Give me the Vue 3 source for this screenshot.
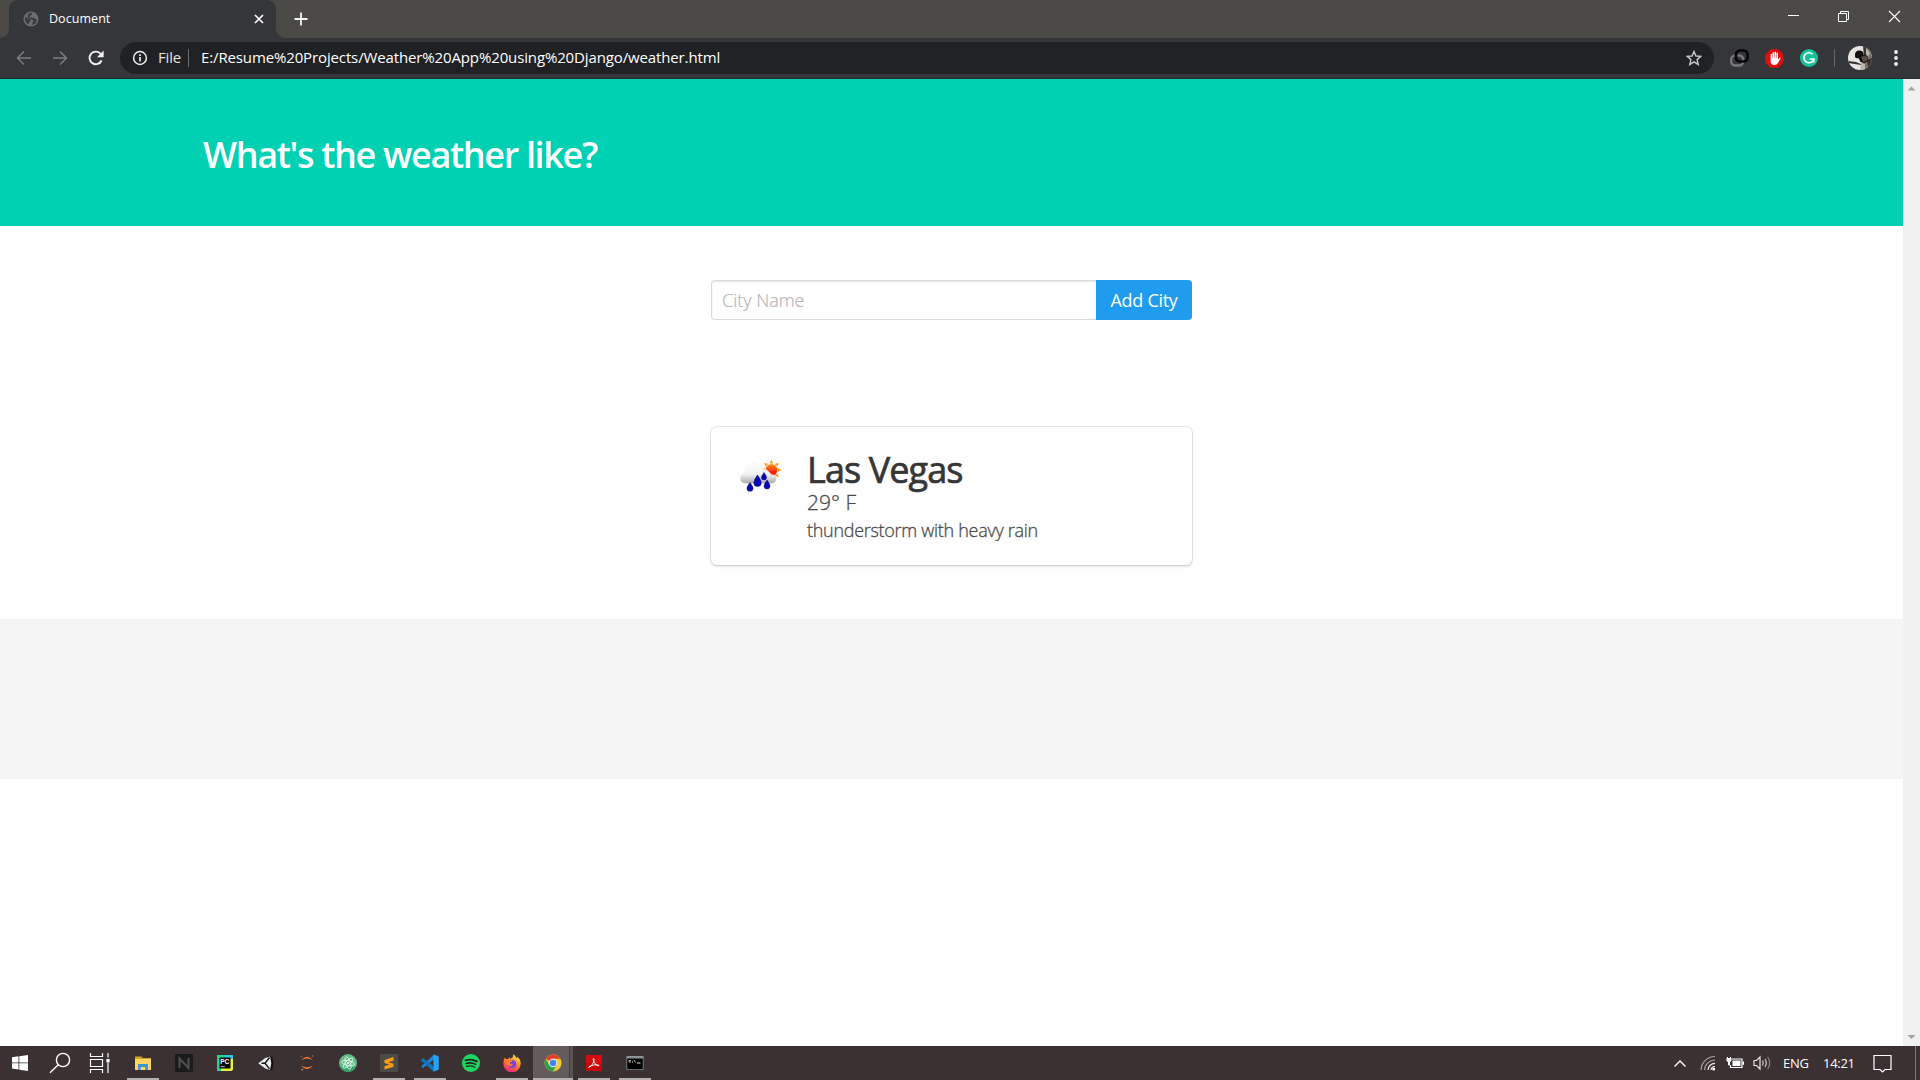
<script setup>
const tasks = [
  { id: 'explorer', open: true },
  { id: 'next' },
  { id: 'pycharm' },
  { id: 'unity' },
  { id: 'jupyter' },
  { id: 'atom' },
  { id: 'sublime', open: true },
  { id: 'vscode', open: true },
  { id: 'spotify' },
  { id: 'firefox', open: true },
  { id: 'chrome', active: true },
  { id: 'acrobat', open: true },
  { id: 'cmd', open: true },
]
const petals = [0, 60, 120]
const rays = [0, 45, 90, 135, 180, 225, 270, 315]
</script>

<template>
  <div class="screen">
    <header class="tabstrip">
      <div class="tab">
        <svg class="globe" width="16" height="16" viewBox="0 0 16 16">
          <circle cx="8" cy="8" r="7.6" fill="#6a6d71" />
          <path d="M2 5.5 5 7.5 7.5 8v2l-1.5 1 .3 2.5C3.500 12.500 2 10.500 2 8zM6 2l3-.3L8.500 4 6.500 5 7 6.500l4 .3 1.500 1.700L14 8c.2 3-2 5.500-4.800 6l.3-2.500 1-1.500L9 8.500 5.500 7 4.500 5z" fill="#3b3c40" />
        </svg>
        <span class="tab-title">Document</span>
        <svg class="tab-close" width="10" height="10" viewBox="0 0 10 10"><path d="M1 1l8 8M9 1l-8 8" stroke="#fff" stroke-width="1.7" /></svg>
      </div>
      <svg class="newtab" width="14" height="14" viewBox="0 0 14 14"><path d="M7 .5v13M.5 7h13" stroke="#f4f4f4" stroke-width="1.8" /></svg>
      <div class="winctl">
        <svg width="50" height="34" viewBox="0 0 50 34"><path d="M19 15.500h11" stroke="#fff" /></svg>
        <svg width="50" height="34" viewBox="0 0 50 34"><path d="M19.500 13.500h8v8h-8zM21.500 13.500v-2h8v8h-2" fill="none" stroke="#fff" /></svg>
        <svg width="50" height="34" viewBox="0 0 50 34"><path d="M20 11l11 11M31 11l-11 11" stroke="#fff" stroke-width="1.1" /></svg>
      </div>
    </header>

    <nav class="toolbar">
      <svg class="nav" width="16" height="16" viewBox="0 0 16 16"><path d="M15 8H2M8 1.500 1.500 8 8 14.500" fill="none" stroke="#7c7d80" stroke-width="1.5" /></svg>
      <svg class="nav" width="16" height="16" viewBox="0 0 16 16"><path d="M1 8h13M8 1.500 14.500 8 8 14.500" fill="none" stroke="#7c7d80" stroke-width="1.5" /></svg>
      <svg class="nav" width="16" height="16" viewBox="0 0 16 16"><path d="M13.600 10.500A6.300 6.300 0 1 1 12.800 4" fill="none" stroke="#f1f1f1" stroke-width="1.9" /><path d="M15.600.5v6.700H9z" fill="#f1f1f1" /></svg>
      <div class="omnibox">
        <svg width="16" height="16" viewBox="0 0 16 16"><circle cx="8" cy="8" r="6.400" fill="none" stroke="#eee" stroke-width="1.500" /><path d="M8 7v4.500M8 4.300v1.700" stroke="#eee" stroke-width="1.700" /></svg>
        <span class="scheme">File</span>
        <i class="divider"></i>
        <span class="url">E:/Resume%20Projects/Weather%20App%20using%20Django/weather.html</span>
        <svg class="star" width="16" height="16" viewBox="0 0 16 16"><path d="M8 1.500 9.900 6l4.900.400-3.700 3.200 1.100 4.800L8 11.800l-4.200 2.600 1.100-4.800L1.200 6.400 6.100 6z" fill="none" stroke="#c9cacc" stroke-width="1.400" /></svg>
      </div>
      <svg class="ext1" width="19" height="18" viewBox="0 0 19 18">
        <rect x="1.200" y="6.500" width="12" height="10" rx="4" fill="none" stroke="#76787c" stroke-width="2.400" />
        <rect x="6" y="1.500" width="11.500" height="11" rx="4" fill="none" stroke="#050506" stroke-width="2.700" />
      </svg>
      <svg class="ext2" width="19" height="19" viewBox="0 0 19 19">
        <path d="M5.600.300h7.600L18.500 5.700v7.600l-5.300 5.400H5.600L.3 13.300V5.700z" fill="#e40d0d" />
        <path d="M5.600 10V5.200q.8-.9 1.500 0V9h.4V3.500q.8-.9 1.600 0V8.500h.4V3q.8-.9 1.600 0v5.700h.4V4q.8-.9 1.500 0v6.500l1.500-1.700q1-.4 1.200.3L13 14q-1 2-3.700 2-3.700 0-3.700-4z" fill="#fff" />
      </svg>
      <svg class="ext3" width="18" height="18" viewBox="0 0 18 18">
        <circle cx="9" cy="9" r="9" fill="#15c39a" />
        <path d="M12.600 5.300A5 5 0 1 0 13.800 10H9.800M13.800 10v3.500" fill="none" stroke="#fff" stroke-width="1.600" />
      </svg>
      <i class="bar"></i>
      <svg class="avatar" width="24" height="24" viewBox="0 0 24 24">
        <defs><clipPath id="face"><circle cx="12" cy="12" r="12" /></clipPath></defs>
        <g clip-path="url(#face)">
          <rect width="24" height="24" fill="#e6e5e2" />
          <path d="M18 0h6v24h-9l-1-9z" fill="#77716a" />
          <path d="M15 0h3l1 9-3 2zM0 15l8 1 5 2v1l-13-2zM19 14l5-2v8l-4 1z" fill="#37332f" />
          <path d="M18 2l4 5-2 4-2-3zM13 17l4 1v6h-5z" fill="#b9b3a9" />
          <path d="M7 9q0-5 5-4.500Q16 5 15.500 9l4 1 1 5-4 2-4-1-2-4q-4 1-3.500-3z" fill="#12100f" />
          <path d="M13 11q4-2 7 0l-1 4-4 1z" fill="#554b43" />
        </g>
      </svg>
      <svg class="dots" width="4" height="16" viewBox="0 0 4 16" fill="#eee"><circle cx="2" cy="2" r="1.900" /><circle cx="2" cy="8" r="1.900" /><circle cx="2" cy="14" r="1.900" /></svg>
    </nav>

    <div class="viewport">
      <main class="page">
        <section class="hero"><h1>What's the weather like?</h1></section>
        <section class="form-section">
          <form class="field" @submit.prevent>
            <input type="text" placeholder="City Name" />
            <button>Add City</button>
          </form>
        </section>
        <section class="cards">
          <article class="box">
            <svg class="weather" width="50" height="50" viewBox="0 0 50 50">
              <defs>
                <linearGradient id="cloud" x1="0" y1="0" x2="0" y2="1"><stop offset="0" stop-color="#fff" /><stop offset=".55" stop-color="#f1f1f1" /><stop offset="1" stop-color="#a9a9a9" /></linearGradient>
                <linearGradient id="sun" x1="0" y1="0" x2="0" y2="1"><stop offset="0" stop-color="#ff9a16" /><stop offset=".7" stop-color="#ff2010" /></linearGradient>
              </defs>
              <g transform="translate(36.500 19)">
                <path v-for="r in rays" :key="r" d="M-2-6.500h4L0-10.300z" fill="#ffa01c" :transform="`rotate(${r})`" />
                <circle r="6" fill="url(#sun)" />
              </g>
              <path d="M10.500 32.500Q5 32 5.200 27.500 5.500 23 9.500 22 10 13 18 12.200q7 0 9.500 6 4-1.200 6 2.300l3 3.200q5 0 5 4.500-.5 4-5.500 4.300z" fill="url(#cloud)" stroke="#ededed" stroke-width=".5" />
              <g fill="#0808b5" stroke="#06067e" stroke-width=".5">
                <path d="M22.500 24q3.800 5.500 3.800 7.800a3.800 3.800 0 0 1-7.600 0q0-2.300 3.800-7.800z" />
                <path d="M29 21.500q2.500 3.500 2.500 5a2.500 2.500 0 0 1-5 0q0-1.500 2.500-5z" />
                <path d="M15 31.500q3.100 4.200 3.100 5.700a3.100 3.100 0 0 1-6.200 0q0-1.500 3.100-5.700z" />
                <path d="M32 29q3 4.300 3 6a3 3 0 0 1-6 0q0-1.700 3-6z" />
              </g>
            </svg>
            <div class="info">
              <h2>Las Vegas</h2>
              <p class="temp">29° F</p>
              <p class="desc">thunderstorm with heavy rain</p>
            </div>
          </article>
        </section>
        <footer class="footer"></footer>
      </main>
      <aside class="scroll">
        <svg width="17" height="17" viewBox="0 0 17 17"><path d="M4.500 11.500h8l-4-4z" fill="#a3a3a3" /></svg>
        <svg width="17" height="17" viewBox="0 0 17 17"><path d="M4.500 6h8l-4 4z" fill="#a3a3a3" /></svg>
      </aside>
    </div>

    <footer class="taskbar">
      <div class="sys start"><svg width="16" height="16" viewBox="0 0 16 16" fill="#fff"><path d="M0 2.200 6.500 1.300v6.200H0zM7.300 1.200 16 0v7.500H7.300zM0 8.300h6.500v6.200L0 13.600zM7.300 8.300H16V16l-8.700-1.200z" /></svg></div>
      <div class="sys search"><svg width="22" height="22" viewBox="0 0 22 22" fill="none" stroke="#fff" stroke-width="1.400"><circle cx="14" cy="8" r="6.600" /><path d="M9.300 12.800 1 20.800" /></svg></div>
      <div class="sys view"><svg width="22" height="20" viewBox="0 0 22 20" fill="none" stroke="#fff" stroke-width="1.200"><path d="M1.500 0v3.500h12V0M1.500 20v-3.500h12V20M1.500 6.500h12v7h-12zM19 0v4.500M19 10v10" /><path d="M19 6v3.500" stroke-width="3.200" /></svg></div>
      <div v-for="t in tasks" :key="t.id" class="task" :class="{ open: t.open, active: t.active }">
        <svg width="18" height="18" viewBox="0 0 18 18">
          <template v-if="t.id === 'explorer'"><path d="M1 2.500h6.500l1 1.500H17v12H1z" fill="#dba21d" /><path d="M1 5h16v11H1z" fill="#ffd465" /><path d="M4 16v-6h10v6h-2.700v-3H6.700v3z" fill="#3f93dc" /></template>
          <template v-else-if="t.id === 'next'"><rect width="18" height="18" rx="1.500" fill="#1b1b1c" /><path d="M4.500 14V4.500L13.500 14V4" fill="none" stroke="#4e5153" stroke-width="2" /></template>
          <template v-else-if="t.id === 'pycharm'"><path d="M1 1h8l-3 16H1z" fill="#21d789" /><path d="M9 1h8v5H6z" fill="#33c5e0" /><path d="M17 5v10.500L15.500 17H5l-1-3 9-9z" fill="#e9ef3d" /><path d="M1 10h4v7H1z" fill="#21d789" /><rect x="3.500" y="3.500" width="11" height="11" fill="#070707" /><text x="4.200" y="9.600" font-size="6.500" font-weight="700" fill="#fff" font-family="Liberation Sans, sans-serif">PC</text><path d="M4.700 12.700h4" stroke="#bbb" /></template>
          <template v-else-if="t.id === 'unity'"><path d="M1 9.300 12.200 2l3.300 1.200.9 6.100-.9 6.200-3.300 1.300z" fill="#111" /><path d="M1.200 9.200 8.300 4l4.700-1.500 1.300 6.700-1.300 6.700-4.700-1.500z" fill="#efefef" /><path d="M8 9.200h-3.500M8 9.200 12.500 3.500M8 9.200l4.500 5.700" stroke="#151515" fill="none" stroke-width="1.500" /></template>
          <template v-else-if="t.id === 'jupyter'"><path d="M3 6.300Q9-1 15 6.300 9 2.800 3 6.300zM3 11.500q6 7.300 12 0-6 3.500-12 0z" fill="#f37726" /><circle cx="14.500" cy="2" r=".8" fill="#888" /><circle cx="3.500" cy="2.500" r=".7" fill="#777" /><circle cx="4.300" cy="15.600" r="1.100" fill="#8a8784" /></template>
          <template v-else-if="t.id === 'atom'"><circle cx="9" cy="9" r="9" fill="#62ba85" /><path d="M1 13a9 9 0 0 0 16 0z" fill="#38a06b" /><g fill="none" stroke="#e2f4e8" stroke-width=".9"><ellipse v-for="p in petals" :key="p" cx="9" cy="9" rx="6.500" ry="2.400" :transform="`rotate(${p + 12} 9 9)`" /></g><circle cx="9" cy="9" r="1.100" fill="#fff" /></template>
          <template v-else-if="t.id === 'sublime'"><rect width="18" height="18" rx="1.200" fill="#4b4b4a" /><path d="M4.500 6 13.500 3v3.400L8.300 8.200l5.200 1.600v3L4.500 15.500v-3.300L9.500 10.600 4.500 9z" fill="#ff9b11" /></template>
          <template v-else-if="t.id === 'vscode'"><path d="M13 .5v5L2 14 .3 12.200z" fill="#1b87d2" /><path d="M.3 5.800 2 4 13 12.500v5.200L.3 6.800z" fill="#0d74c0" /><path d="M12.500.2 17.800 2.500v13l-5.300 2.300z" fill="#27a3f2" /></template>
          <template v-else-if="t.id === 'spotify'"><circle cx="9" cy="9" r="9" fill="#1ed760" /><g fill="none" stroke="#202120" stroke-linecap="round"><path d="M3.500 6.300q6-1.800 11.300 1" stroke-width="1.900" /><path d="M4 9.400q5.200-1.400 9.800 1" stroke-width="1.600" /><path d="M4.500 12.300q4.600-1.100 8.300.9" stroke-width="1.300" /></g></template>
          <template v-else-if="t.id === 'firefox'"><defs><linearGradient id="fox" x1=".8" y1="0" x2=".3" y2="1"><stop offset="0" stop-color="#fff04a" /><stop offset=".45" stop-color="#ff8a25" /><stop offset="1" stop-color="#f0207c" /></linearGradient></defs><path d="M1.800 3.500 3.200 5.300 5.500 4.700 6.300 2.700 7 5l3-2 .3-2.700q2 1.200 3.200 4l1-1.500q3.500 3.200 3.200 7A8.700 8.700 0 0 1 .3 9.500Q.3 6 1.800 3.500z" fill="url(#fox)" /><circle cx="9.300" cy="10" r="4" fill="#7c42e0" /><path d="M3 6.500q4-1 6.500 0L8.700 8 6.800 8.500q.2 2.500 3.400 2-1.700 2.500-4.500 1-2.500-1.500-2.700-5z" fill="#ff8126" /></template>
          <template v-else-if="t.id === 'chrome'"><circle cx="9" cy="9" r="8.500" fill="#fcc934" /><path d="M9 9 1.640 4.750A8.500 8.500 0 0 1 16.360 4.750H9z" fill="#e3402f" /><path d="M1.640 4.750A8.500 8.500 0 0 0 9 17.500L12.700 11 9 9 5.300 11z" fill="#2a9f4f" /><circle cx="9" cy="9" r="4.300" fill="#f5f5f5" /><circle cx="9" cy="9" r="3.300" fill="#4284f3" /></template>
          <template v-else-if="t.id === 'acrobat'"><rect x="1" y="1" width="16" height="16" fill="#c8060a" /><rect x="1" y="1" width="16" height="8" fill="#d80b0e" /><path d="M3.800 13.500q2.500-.3 4.800-5.500Q9.800 4.500 8.500 4.300 7.500 4.500 9 8q2.200 4 4.800 4 .8-.8-1.200-1.200-3.700-.3-7.300 1.200-2 1-1.500 1.500z" fill="none" stroke="#fff" stroke-width=".9" /></template>
          <template v-else><rect x=".5" y="2" width="17" height="14" fill="#8d9598" /><rect x="1.200" y="4.500" width="15.600" height="10.800" fill="#020202" /><path d="M3 7.800V6.500h2M3 8h2M6.500 6.800v.8M6.500 8v.8M8 6l1.500 2.500" stroke="#ddd" stroke-width=".8" fill="none" /><path d="M11 9h3.500" stroke="#ddd" /></template>
        </svg>
      </div>
      <div class="tray">
        <svg class="t-up" width="14" height="9" viewBox="0 0 14 9"><path d="M1.500 7.500 7 2l5.500 5.500" fill="none" stroke="#fff" stroke-width="1.400" /></svg>
        <svg class="t-wifi" width="16" height="16" viewBox="0 0 16 16" fill="none" stroke="#a9a4a4" stroke-width="1.200"><path d="M1 15A14 14 0 0 1 15 1.500M4.500 15A10.500 10.500 0 0 1 15 5" /><path d="M8 15A7 7 0 0 1 15 8.300M11 15a4 4 0 0 1 4-3.500" stroke="#eee" /><circle cx="13.700" cy="14" r="1.500" fill="#fff" stroke="none" /></svg>
        <svg class="t-bat" width="18" height="14" viewBox="0 0 18 14"><path d="M6 3h10v8.500H4.500V9" fill="none" stroke="#fff" stroke-width="1.200" /><path d="M6.500 4.500h8V10h-8zM16.500 5.500H18v3.200h-1.500zM.5 2h5v2.800L4 6.200v3H2v-3L.5 4.800zM1 1h1v2H1zM4 1h1v2H4z" fill="#fff" /></svg>
        <svg class="t-vol" width="19" height="16" viewBox="0 0 19 16" fill="none" stroke="#e5e5e5" stroke-width="1.200"><path d="M1 5.500h2.500L7 2v12l-3.500-3.500H1z" /><path d="M9.500 5.500q1.500 2.500 0 5M12 4q2.500 4 0 8" stroke="#d0cccc" /><path d="M14.700 2q4 6 0 12" stroke="#8a8484" /></svg>
        <span class="lang">ENG</span>
        <span class="clock">14:21</span>
        <svg class="t-note" width="19" height="19" viewBox="0 0 19 19"><path d="M1 1.500h17v14h-6L9.500 18 7 15.500H1z" fill="none" stroke="#fff" stroke-width="1.200" /></svg>
        <i class="peek"></i>
      </div>
    </footer>
  </div>
</template>

<style>
body { margin: 0; overflow: hidden; background: #fff; }
</style>

<style scoped>
.screen { width: 1920px; height: 1080px; display: flex; flex-direction: column; font-family: "Open Sans", "Noto Sans", sans-serif; overflow: hidden; }
.screen svg { display: block; flex: none; }
span, h1, h2, p { white-space: nowrap; }
.tabstrip { height: 38px; flex: none; background: #4b4a46; display: flex; align-items: center; }
.tab { position: relative; box-sizing: border-box; width: 267px; height: 38px; margin-left: 9px; padding: 0 12px 0 14px; background: #35363a; border-radius: 9px 9px 0 0; display: flex; align-items: center; color: #fff; }
.tab::before, .tab::after { content: ""; position: absolute; bottom: 0; width: 9px; height: 9px; }
.tab::before { left: -9px; background: radial-gradient(circle at 0 0, transparent 8.500px, #35363a 9px); }
.tab::after { right: -9px; background: radial-gradient(circle at 100% 0, transparent 8.500px, #35363a 9px); }
.tab-title { font-size: 12.500px; margin-left: 10px; padding-bottom: 2px; letter-spacing: .05px; }
.tab-close { margin-left: auto; }
.newtab { margin-left: 18px; }
.winctl { margin-left: auto; margin-right: 1px; display: flex; height: 34px; align-self: flex-start; }
.toolbar { height: 41px; flex: none; box-sizing: border-box; border-bottom: 1px solid #28292b; background: #35363a; display: flex; align-items: center; }
.nav { margin-left: 20px; }
.nav:first-child { margin-left: 16px; }
.omnibox { margin-left: 16px; width: 1594px; height: 32px; box-sizing: border-box; border-radius: 16px; background: #202124; display: flex; align-items: center; padding: 0 12px 1px; color: #fff; font-size: 15px; }
.scheme { margin-left: 10px; width: 24px; padding-bottom: 1px; letter-spacing: -.2px; color: #e3e3e3; }
.divider { width: 1px; height: 18px; background: #6c6d70; margin-left: 6px; }
.url { margin-left: 12px; padding-bottom: 1px; letter-spacing: -.13px; }
.star { margin-left: auto; }
.ext1 { margin-left: 16px; }
.ext2 { margin-left: 16px; }
.ext3 { margin-left: 16px; }
.bar { width: 1px; height: 18px; background: #65676a; margin-left: 16px; }
.avatar { margin-left: 13px; }
.dots { margin-left: 22px; }
.viewport { flex: 1; min-height: 0; display: flex; }
.page { flex: 1; display: flex; flex-direction: column; background: #fff; }
.hero { height: 147px; box-sizing: border-box; background: #00d1b2; padding: 53px 0 0 203px; }
.hero h1 { margin: 0; color: #fff; font-size: 36px; line-height: 46px; font-weight: 600; letter-spacing: -1.35px; }
.form-section { height: 200px; box-sizing: border-box; padding: 54px 0 0 711px; }
.field { display: flex; width: 481px; height: 40px; margin: 0; }
.field input { width: 385px; height: 40px; box-sizing: border-box; margin: 0; border: 1px solid #dbdbdb; border-right: 0; border-radius: 4px 0 0 4px; padding: 0 10px; box-shadow: inset 0 1px 2px rgba(10,10,10,.1); font: 300 18px "Open Sans", sans-serif; outline: 0; }
.field input::placeholder { color: #b5b5b5; opacity: 1; -webkit-text-stroke: .2px #b5b5b5; }
.field button { width: 96px; height: 40px; margin: 0; padding: 0; border: 0; border-radius: 0 4px 4px 0; background: #209cee; color: #fff; font: 400 18px "Open Sans", sans-serif; letter-spacing: -.3px; white-space: nowrap; }
.cards { height: 193px; box-sizing: border-box; padding: 1px 0 0 711px; }
.box { width: 481px; height: 138px; box-sizing: border-box; padding: 24px 24px 0; border-radius: 6px; background: #fff; box-shadow: 0 2px 3px rgba(10,10,10,.1), 0 0 0 1px rgba(10,10,10,.1); display: flex; }
.info { margin-left: 22px; color: #4a4a4a; }
.info h2 { margin: 0; color: #363636; font-size: 36px; line-height: 38px; font-weight: 400; letter-spacing: -.9px; -webkit-text-stroke: .7px #363636; }
.info p { margin: 0; }
.info .temp { font-size: 21px; line-height: 27px; font-weight: 300; -webkit-text-stroke: .3px #4a4a4a; }
.info .desc { font-size: 18px; line-height: 28px; font-weight: 300; letter-spacing: -.29px; -webkit-text-stroke: .3px #4a4a4a; }
.footer { height: 160px; background: #f5f5f5; }
.scroll { width: 17px; background: #f1f1f1; display: flex; flex-direction: column; justify-content: space-between; }
.taskbar { height: 34px; flex: none; background: #3b3132; display: flex; align-items: center; color: #fff; }
.sys { display: flex; justify-content: center; width: 40px; }
.view { width: 43px; box-sizing: border-box; padding-right: 3px; }
.task { position: relative; box-sizing: border-box; width: 41px; height: 34px; padding-right: 2px; display: flex; align-items: center; justify-content: center; }
.task.open::after { content: ""; position: absolute; left: 4px; bottom: 0; width: 32px; height: 2px; background: #b5b1ac; }
.task.active { background: linear-gradient(90deg, #645b5b 36px, #443b3c 36px, #443b3c 37px, #5b5252 37px); width: 40px; padding-right: 1px; margin-right: 1px; box-shadow: inset 0 -2px #b5b1ac; }
.tray { margin-left: auto; display: flex; align-items: center; height: 34px; }
.t-wifi { margin-left: 13px; }
.t-bat { margin-left: 10px; }
.t-vol { margin-left: 9px; }
.lang, .clock { font-size: 13px; letter-spacing: -.3px; }
.lang { margin-left: 11px; width: 27px; }
.clock { margin-left: 13px; width: 31px; }
.t-note { margin-left: 19px; }
.peek { width: 1px; height: 34px; margin-left: 23px; margin-right: 4px; background: #817a7a; }
</style>
